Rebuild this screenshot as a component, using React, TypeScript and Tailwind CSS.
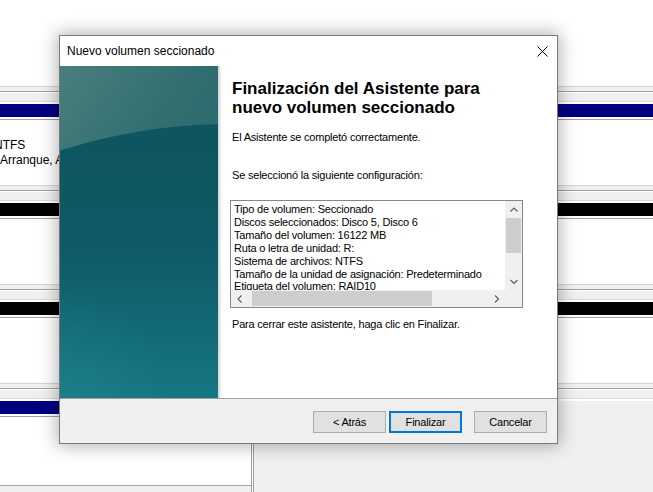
import React from "react";

const listLines = [
  "Tipo de volumen: Seccionado",
  "Discos seleccionados: Disco 5, Disco 6",
  "Tamaño del volumen: 16122 MB",
  "Ruta o letra de unidad: R:",
  "Sistema de archivos: NTFS",
  "Tamaño de la unidad de asignación: Predeterminado",
  "Etiqueta del volumen: RAID10",
  "Formato rápido: Sí",
];

// gray strip above each disk row
function RowHeader() {
  return (
    <div className="flex flex-col">
      <div className="h-px bg-[#d4d4d4]" />
      <div className="h-[4px] bg-[#f0f0f0]" />
      <div className="h-px bg-[#a0a0a0]" />
      <div className="h-px bg-white" />
      <div className="h-[8px] bg-[#f0f0f0]" />
      <div className="h-px bg-[#dadada]" />
      <div className="h-[2px] bg-white" />
    </div>
  );
}

function DiskRow({ band, children }: { band: string; children?: React.ReactNode }) {
  return (
    <div className="h-[99px] flex flex-col">
      <RowHeader />
      <div className={`h-[13px] ${band}`} />
      <div className="h-[2px] bg-white" />
      <div className="h-px bg-[#a0a0a0]" />
      <div className="flex-1 bg-white overflow-hidden">{children}</div>
    </div>
  );
}

function Chevron({ dir }: { dir: "up" | "down" | "left" | "right" }) {
  const pts = {
    up: "0.5,4.5 4,1 7.5,4.5",
    down: "0.5,1 4,4.5 7.5,1",
    left: "4.5,0.5 1,4 4.5,7.5",
    right: "1,0.5 4.5,4 1,7.5",
  }[dir];
  const vertical = dir === "up" || dir === "down";
  return (
    <svg width={vertical ? 8 : 6} height={vertical ? 6 : 8} className="block">
      <polyline points={pts} fill="none" stroke="#606060" strokeWidth="1.2" />
    </svg>
  );
}

function WizardArt() {
  return (
    <svg width="158" height="332" viewBox="0 0 158 332" className="block shrink-0">
      <defs>
        <linearGradient id="wzTop" x1="0" y1="0" x2="158" y2="110" gradientUnits="userSpaceOnUse">
          <stop offset="0" stopColor="#4a7e7d" />
          <stop offset="0.55" stopColor="#336f71" />
          <stop offset="1" stopColor="#29686c" />
        </linearGradient>
        <linearGradient id="wzLow" x1="0" y1="58" x2="0" y2="332" gradientUnits="userSpaceOnUse">
          <stop offset="0" stopColor="#0d5560" />
          <stop offset="0.45" stopColor="#0e5a66" />
          <stop offset="1" stopColor="#167683" />
        </linearGradient>
        <radialGradient id="wzGlow" cx="0" cy="332" r="110" gradientUnits="userSpaceOnUse">
          <stop offset="0" stopColor="#2a8a94" stopOpacity="0.4" />
          <stop offset="1" stopColor="#2a8a94" stopOpacity="0" />
        </radialGradient>
      </defs>
      <rect width="158" height="332" fill="url(#wzTop)" />
      <ellipse cx="170" cy="420" rx="450" ry="362" fill="url(#wzLow)" />
      <rect width="158" height="332" fill="url(#wzGlow)" />
    </svg>
  );
}

function Button({ label, focused }: { label: string; focused?: boolean }) {
  return (
    <div
      className={`w-[73px] h-[22px] flex items-center justify-center bg-[#e1e1e1] text-[11px] tracking-[-0.2px] ${
        focused ? "border-2 border-[#0078d7]" : "border border-[#adadad]"
      }`}
    >
      {label}
    </div>
  );
}

function Dialog() {
  return (
    <div className="absolute left-[59px] top-[35px] z-10 w-[499px] h-[409px] flex flex-col border border-[#7a7a7a] bg-white shadow-[0_0_16px_2px_rgba(0,0,0,0.3)]">
      <div className="h-[30px] shrink-0 flex items-center justify-between pl-[7px] pr-[9px]">
        <span className="text-[12px]">Nuevo volumen seccionado</span>
        <svg width="11" height="11" className="block">
          <path d="M0.5 0.5 L10.5 10.5 M10.5 0.5 L0.5 10.5" stroke="#000" strokeWidth="1" />
        </svg>
      </div>

      <div className="h-[332px] shrink-0 flex">
        <WizardArt />
        <div className="w-[4px] bg-gradient-to-r from-[#d2d2d2] to-white" />
        <div className="flex-1 pl-[10px] pr-[10px] pt-[13px] text-[11px] tracking-[-0.2px]">
          <h1 className="text-[17px] leading-[19px] font-bold tracking-normal">
            Finalización del Asistente para
            <br />
            nuevo volumen seccionado
          </h1>
          <p className="mt-[14px] leading-[13px]">El Asistente se completó correctamente.</p>
          <p className="mt-[25px] leading-[13px]">Se seleccionó la siguiente configuración:</p>

          <div className="mt-[18px] -ml-[2px] w-[293px] h-[108px] border border-[#828790] flex flex-col">
            <div className="h-[89px] flex">
              <div className="flex-1 overflow-hidden pl-[3px] pt-[2px] leading-[12.9px] whitespace-nowrap">
                {listLines.map((l) => (
                  <div key={l}>{l}</div>
                ))}
              </div>
              <div className="w-[17px] bg-[#f0f0f0] flex flex-col items-center">
                <div className="h-[17px] flex items-center justify-center">
                  <Chevron dir="up" />
                </div>
                <div className="w-[15px] h-[35px] bg-[#cdcdcd]" />
                <div className="flex-1" />
                <div className="h-[17px] flex items-center justify-center">
                  <Chevron dir="down" />
                </div>
              </div>
            </div>
            <div className="h-[17px] flex">
              <div className="flex-1 bg-[#f0f0f0] flex items-center">
                <div className="w-[17px] flex justify-center">
                  <Chevron dir="left" />
                </div>
                <div className="ml-[4px] w-[180px] h-[15px] bg-[#cdcdcd]" />
                <div className="flex-1" />
                <div className="w-[17px] flex justify-center">
                  <Chevron dir="right" />
                </div>
              </div>
              <div className="w-[17px] bg-[#f0f0f0]" />
            </div>
          </div>

          <p className="mt-[10px] leading-[13px]">Para cerrar este asistente, haga clic en Finalizar.</p>
        </div>
      </div>

      <div className="h-px shrink-0 bg-[#a0a0a0]" />
      <div className="flex-1 bg-[#f0f0f0] flex justify-end items-start pt-[12px] pr-[10px]">
        <Button label="< Atrás" />
        <div className="w-[3px]" />
        <Button label="Finalizar" focused />
        <div className="w-[12px]" />
        <Button label="Cancelar" />
      </div>
    </div>
  );
}

export default function App() {
  return (
    <div className="relative w-[653px] h-[492px] overflow-hidden bg-white text-black font-['Liberation_Sans',Arial,sans-serif]">
      <div className="h-[86px]" />
      <DiskRow band="bg-[#000080]">
        <div className="pt-[18px] text-[12px] leading-[15px] whitespace-nowrap">
          <div className="-ml-[6px]">NTFS</div>
          <div>Arranque, Archivo de paginación, Volcado</div>
        </div>
      </DiskRow>
      <DiskRow band="bg-black" />
      <DiskRow band="bg-black" />
      <RowHeader />
      <div className="h-[91px] flex">
        <div className="w-[254px] flex flex-col border-r-[3px] border-double border-[#a0a0a0]">
          <div className="h-[13px] bg-[#000080]" />
          <div className="h-[2px] bg-white" />
          <div className="h-px bg-[#a0a0a0]" />
          <div className="flex-1 bg-white" />
          <div className="h-px bg-[#a0a0a0]" />
          <div className="h-[6px] bg-[#f0f0f0]" />
        </div>
        <div className="flex-1 bg-[#f0f0f0]" />
      </div>
      <Dialog />
    </div>
  );
}
